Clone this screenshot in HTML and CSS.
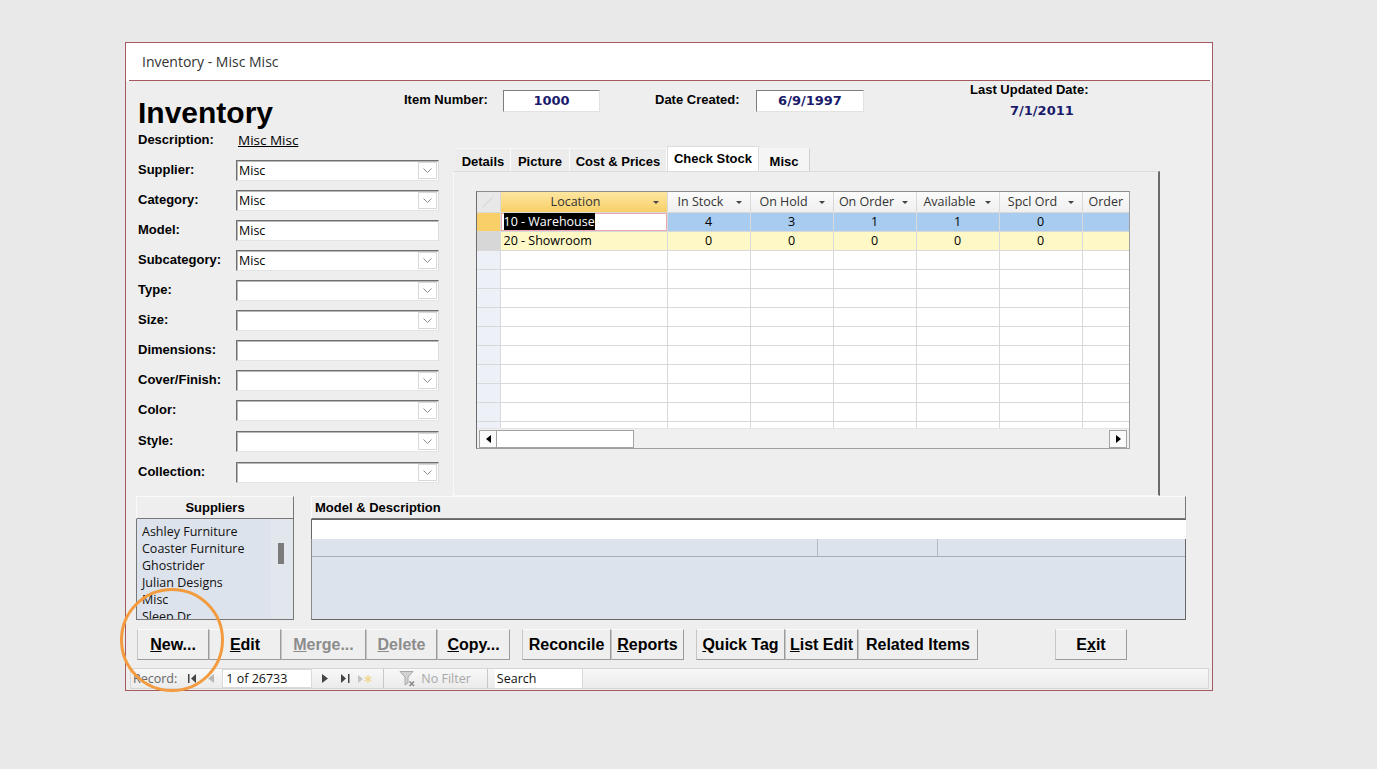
FILE: index.html
```html
<!DOCTYPE html>
<html lang="en">
<head>
    <meta charset="UTF-8">
    <meta name="viewport" content="width=device-width, initial-scale=1.0">
    <title>Inventory - Misc Misc</title>
    <link rel="stylesheet" href="styles.css">
</head>
<body>
    <div class="window">
        <div class="titlebar"><div class="title">Inventory - Misc Misc</div></div>

        <div class="form">
            <!-- Header -->
            <div class="head">
                <h1 class="heading">Inventory</h1>
                <span class="hlabel item-label">Item Number:</span>
                <div class="hbox item-box">1000</div>
                <span class="hlabel date-label">Date Created:</span>
                <div class="hbox date-box">6/9/1997</div>
                <div class="updated">
                    <div class="hlabel">Last Updated Date:</div>
                    <div class="upd-val">7/1/2011</div>
                </div>
            </div>

            <div class="main">
                <!-- Left fields -->
                <div class="fields">
                    <div class="desc"><span class="lbl">Description:</span><span class="desc-val">Misc Misc</span></div>
                    <div class="row"><span class="lbl">Supplier:</span><div class="input"><span class="val">Misc</span><span class="drop"><svg width="9" height="5" viewBox="0 0 9 5"><polyline points="0.5,0.5 4.5,4.5 8.5,0.5" fill="none" stroke="#8a8a8a"/></svg></span></div></div>
                    <div class="row"><span class="lbl">Category:</span><div class="input"><span class="val">Misc</span><span class="drop"><svg width="9" height="5" viewBox="0 0 9 5"><polyline points="0.5,0.5 4.5,4.5 8.5,0.5" fill="none" stroke="#8a8a8a"/></svg></span></div></div>
                    <div class="row"><span class="lbl">Model:</span><div class="input"><span class="val">Misc</span></div></div>
                    <div class="row"><span class="lbl">Subcategory:</span><div class="input"><span class="val">Misc</span><span class="drop"><svg width="9" height="5" viewBox="0 0 9 5"><polyline points="0.5,0.5 4.5,4.5 8.5,0.5" fill="none" stroke="#8a8a8a"/></svg></span></div></div>
                    <div class="row"><span class="lbl">Type:</span><div class="input"><span class="val"></span><span class="drop"><svg width="9" height="5" viewBox="0 0 9 5"><polyline points="0.5,0.5 4.5,4.5 8.5,0.5" fill="none" stroke="#8a8a8a"/></svg></span></div></div>
                    <div class="row"><span class="lbl">Size:</span><div class="input"><span class="val"></span><span class="drop"><svg width="9" height="5" viewBox="0 0 9 5"><polyline points="0.5,0.5 4.5,4.5 8.5,0.5" fill="none" stroke="#8a8a8a"/></svg></span></div></div>
                    <div class="row"><span class="lbl">Dimensions:</span><div class="input"><span class="val"></span></div></div>
                    <div class="row"><span class="lbl">Cover/Finish:</span><div class="input"><span class="val"></span><span class="drop"><svg width="9" height="5" viewBox="0 0 9 5"><polyline points="0.5,0.5 4.5,4.5 8.5,0.5" fill="none" stroke="#8a8a8a"/></svg></span></div></div>
                    <div class="row"><span class="lbl">Color:</span><div class="input"><span class="val"></span><span class="drop"><svg width="9" height="5" viewBox="0 0 9 5"><polyline points="0.5,0.5 4.5,4.5 8.5,0.5" fill="none" stroke="#8a8a8a"/></svg></span></div></div>
                    <div class="row nudge"><span class="lbl">Style:</span><div class="input"><span class="val"></span><span class="drop"><svg width="9" height="5" viewBox="0 0 9 5"><polyline points="0.5,0.5 4.5,4.5 8.5,0.5" fill="none" stroke="#8a8a8a"/></svg></span></div></div>
                    <div class="row nudge"><span class="lbl">Collection:</span><div class="input"><span class="val"></span><span class="drop"><svg width="9" height="5" viewBox="0 0 9 5"><polyline points="0.5,0.5 4.5,4.5 8.5,0.5" fill="none" stroke="#8a8a8a"/></svg></span></div></div>
                </div>

                <!-- Tabs -->
                <div class="tabs-col">
                    <div class="tabs">
                        <div class="tab t-details">Details</div>
                        <div class="tab t-picture">Picture</div>
                        <div class="tab t-cost">Cost &amp; Prices</div>
                        <div class="tab t-stock active">Check Stock</div>
                        <div class="tab t-misc">Misc</div>
                    </div>
                    <div class="page">
                        <div class="grid">
                            <div class="grid-body">
                                <table>
                                    <colgroup>
                                        <col class="c-sel"><col class="c-loc"><col class="c-num"><col class="c-num"><col class="c-num"><col class="c-num"><col class="c-num"><col class="c-ord">
                                    </colgroup>
                                    <tr class="hdr-row">
                                        <th class="corner"><svg width="12" height="12" viewBox="0 0 12 12"><line x1="1" y1="11" x2="11" y2="1" stroke="#d2d2d2"/></svg></th>
                                        <th class="hot"><div class="hd"><span>Location</span><i class="arr"></i></div></th>
                                        <th><div class="hd"><span>In Stock</span><i class="arr"></i></div></th>
                                        <th><div class="hd"><span>On Hold</span><i class="arr"></i></div></th>
                                        <th><div class="hd"><span>On Order</span><i class="arr"></i></div></th>
                                        <th><div class="hd"><span>Available</span><i class="arr"></i></div></th>
                                        <th><div class="hd"><span>Spcl Ord</span><i class="arr"></i></div></th>
                                        <th><div class="hd hd-left"><span>Order</span></div></th>
                                    </tr>
                                    <tr class="cur">
                                        <td class="sel"></td>
                                        <td class="loc"><span class="hl">10 - Warehouse</span></td>
                                        <td>4</td><td>3</td><td>1</td><td>1</td><td>0</td><td></td>
                                    </tr>
                                    <tr class="alt">
                                        <td class="sel"></td>
                                        <td class="loc">20 - Showroom</td>
                                        <td>0</td><td>0</td><td>0</td><td>0</td><td>0</td><td></td>
                                    </tr>
                                    <tr class="empty"><td class="sel"></td><td></td><td></td><td></td><td></td><td></td><td></td><td></td></tr>
                                    <tr class="empty"><td class="sel"></td><td></td><td></td><td></td><td></td><td></td><td></td><td></td></tr>
                                    <tr class="empty"><td class="sel"></td><td></td><td></td><td></td><td></td><td></td><td></td><td></td></tr>
                                    <tr class="empty"><td class="sel"></td><td></td><td></td><td></td><td></td><td></td><td></td><td></td></tr>
                                    <tr class="empty"><td class="sel"></td><td></td><td></td><td></td><td></td><td></td><td></td><td></td></tr>
                                    <tr class="empty"><td class="sel"></td><td></td><td></td><td></td><td></td><td></td><td></td><td></td></tr>
                                    <tr class="empty"><td class="sel"></td><td></td><td></td><td></td><td></td><td></td><td></td><td></td></tr>
                                    <tr class="empty"><td class="sel"></td><td></td><td></td><td></td><td></td><td></td><td></td><td></td></tr>
                                    <tr class="empty"><td class="sel"></td><td></td><td></td><td></td><td></td><td></td><td></td><td></td></tr>
                                    <tr class="empty"><td class="sel"></td><td></td><td></td><td></td><td></td><td></td><td></td><td></td></tr>
                                </table>
                            </div>
                            <div class="hscroll">
                                <div class="sb-btn"><svg width="5" height="8" viewBox="0 0 5 8"><polygon points="5,0 0,4 5,8" fill="#000"/></svg></div>
                                <div class="sb-thumb"></div>
                                <div class="sb-track"></div>
                                <div class="sb-btn"><svg width="5" height="8" viewBox="0 0 5 8"><polygon points="0,0 5,4 0,8" fill="#000"/></svg></div>
                            </div>
                        </div>
                    </div>
                </div>
            </div>

            <!-- Lists -->
            <div class="lists">
                <div class="sup">
                    <div class="panel-head">Suppliers</div>
                    <div class="sup-list">
                        <div class="sup-items">
                            <div>Ashley Furniture</div>
                            <div>Coaster Furniture</div>
                            <div>Ghostrider</div>
                            <div>Julian Designs</div>
                            <div>Misc</div>
                            <div>Sleep Dr.</div>
                        </div>
                        <div class="sup-track"><div class="sup-thumb"></div></div>
                    </div>
                </div>
                <div class="model">
                    <div class="panel-head">Model &amp; Description</div>
                    <div class="model-input"></div>
                    <div class="model-list">
                        <div class="ml-head"><span class="ml-c1"></span><span class="ml-c2"></span><span class="ml-c3"></span></div>
                    </div>
                </div>
            </div>

            <!-- Buttons -->
            <div class="buttons">
                <button class="btn w-new"><u>N</u>ew...</button>
                <button class="btn w-edit"><u>E</u>dit</button>
                <button class="btn w-merge off"><u>M</u>erge...</button>
                <button class="btn w-delete off"><u>D</u>elete</button>
                <button class="btn w-copy"><u>C</u>opy...</button>
                <button class="btn w-reconcile gap-s">Reconcile</button>
                <button class="btn w-reports"><u>R</u>eports</button>
                <button class="btn w-quick gap-s"><u>Q</u>uick Tag</button>
                <button class="btn w-list"><u>L</u>ist Edit</button>
                <button class="btn w-related">Related Items</button>
                <button class="btn w-exit gap-l">E<u>x</u>it</button>
            </div>
        </div>

        <!-- Record navigation -->
        <div class="navbar">
            <span class="nav-label">Record:</span>
            <svg class="nav-first" width="9" height="9" viewBox="0 0 9 9"><rect x="0" y="0" width="1.5" height="9" fill="#444"/><polygon points="8,0 3,4.5 8,9" fill="#444"/></svg>
            <svg class="nav-prev" width="6" height="9" viewBox="0 0 6 9"><polygon points="6,0 0,4.5 6,9" fill="#b8b8b8"/></svg>
            <div class="nav-box">1 of 26733</div>
            <svg class="nav-next" width="6" height="9" viewBox="0 0 6 9"><polygon points="0,0 6,4.5 0,9" fill="#444"/></svg>
            <svg class="nav-last" width="9" height="9" viewBox="0 0 9 9"><polygon points="0,0 5,4.5 0,9" fill="#444"/><rect x="7" y="0" width="1.5" height="9" fill="#444"/></svg>
            <svg class="nav-new" width="14" height="10" viewBox="0 0 14 10"><polygon points="0,1 5,5 0,9" fill="#c4c4c4"/><path d="M10 1v8M6.5 3l7 4M13.5 3l-7 4" stroke="#f0d488" stroke-width="1.4"/></svg>
            <span class="nav-sep"></span>
            <svg class="nav-filter" width="18" height="17" viewBox="0 0 18 17"><path d="M1 1.5h13l-5 5.5v6l-3 2v-8z" fill="#d2d2d2" stroke="#a8a8a8"/><path d="M10.5 11.5l4.5 4.5M15 11.5l-4.5 4.5" stroke="#8a8a8a" stroke-width="1.6"/></svg>
            <span class="nav-filter-text">No Filter</span>
            <span class="nav-sep sep2"></span>
            <div class="nav-search">Search</div>
        </div>
    </div>

    <div class="annot"></div>
</body>
</html>
```

FILE: styles.css
```css
body {
    margin: 0;
    background: #e9e9e9;
    font-family: "Open Sans", "Noto Sans", sans-serif;
    font-size: 12.5px;
    color: #000;
}
.window {
    margin: 42px 0 0 125px;
    width: 1088px;
    box-sizing: border-box;
    border: 1px solid #a45b60;
    background: #eeeeee;
    padding-bottom: 1px;
}
.titlebar {
    background: #fff;
    height: 38px;
}
.title {
    margin: 0 2px 0 3px;
    height: 37px;
    border-bottom: 1px solid #a45b60;
    padding-left: 13px;
    line-height: 38px;
    font-size: 14px;
    color: #333;
}
.form {
    padding-left: 12px;
}

/* header */
.head {
    display: flex;
    align-items: flex-start;
    height: 50px;
}
.heading {
    margin: 15px 0 0;
    width: 266px;
    font: bold 30px/34px "Liberation Sans", Arial, sans-serif;
}
.hlabel {
    font: bold 13px/22px "Liberation Sans", Arial, sans-serif;
}
.item-label {
    width: 88px;
    margin: 8px 11px 0 0;
}
.date-label {
    width: 92px;
    margin: 8px 9px 0 55px;
}
.hbox {
    margin-top: 9px;
    height: 22px;
    box-sizing: border-box;
    background: #fff;
    border: 1px solid;
    border-color: #7d7d7d #e2e2e2 #e2e2e2 #7d7d7d;
    font: bold 13px/20px "DejaVu Sans", sans-serif;
    color: #1b1b6b;
    text-align: center;
}
.item-box { width: 97px; }
.date-box { width: 108px; }
.updated {
    margin-left: 106px;
}
.updated .hlabel {
    line-height: 17px;
}
.upd-val {
    margin-top: 4px;
    padding-left: 40px;
    font: bold 13px/18px "DejaVu Sans", sans-serif;
    color: #1b1b6b;
}

/* left fields */
.main {
    display: flex;
    height: 365px;
}
.fields {
    width: 302px;
}
.desc {
    display: flex;
    height: 24px;
    line-height: 18px;
}
.lbl {
    width: 98px;
    flex: none;
    font: bold 13px/18px "Liberation Sans", Arial, sans-serif;
}
.desc-val {
    margin-left: 2px;
    font-size: 13.5px;
    text-decoration: underline;
}
.row {
    display: flex;
    align-items: center;
    height: 30px;
}
.row.nudge {
    margin-top: 1px;
}
.input {
    width: 203px;
    height: 21px;
    box-sizing: border-box;
    background: #fff;
    border: 1px solid;
    border-color: #6f6f6f #dcdcdc #e4e4e4 #6f6f6f;
    box-shadow: inset 1px 1px 0 #b8b8b8;
    display: flex;
    align-items: center;
    padding-left: 2px;
}
.val {
    flex: 1;
    line-height: 17px;
}
.drop {
    width: 19px;
    height: 17px;
    box-sizing: border-box;
    border: 1px solid #d8d8d8;
    margin-right: 1px;
    display: flex;
    align-items: center;
    justify-content: center;
    background: #fff;
}

/* tabs */
.tabs-col {
    margin: 17px 0 0 13px;
    width: 707px;
}
.tabs {
    display: flex;
    height: 23px;
    padding-left: 3px;
}
.tab {
    box-sizing: border-box;
    height: 23px;
    padding-top: 2px;
    border-right: 1px solid #fdfdfd;
    border-top: 1px solid #f6f6f6;
    background: #ececec;
    font: bold 13px/21px "Liberation Sans", Arial, sans-serif;
    text-align: center;
}
.t-details { width: 55px; }
.t-picture { width: 59px; }
.t-cost { width: 97px; }
.t-stock { width: 92px; }
.t-misc { width: 51px; background: #f5f5f5; border-right-color: #cfcfcf; }
.tab.active {
    background: #fff;
    margin-top: -2px;
    height: 25px;
    padding-top: 1px;
    line-height: 21px;
    border: 1px solid #dcdcdc;
    border-bottom: none;
}
.page {
    height: 325px;
    box-sizing: border-box;
    border: 1px solid #f8f8f8;
    border-top-color: #dcdcdc;
    border-right: 2px solid #6a6a6a;
}

/* datasheet */
.grid {
    margin: 19px 0 0 22px;
    width: 654px;
    height: 258px;
    box-sizing: border-box;
    border: 1px solid #a0a0a0;
    border-left-color: #6d6d6d;
    border-top-color: #8c8c8c;
    background: #fff;
}
.grid-body {
    height: 236px;
    overflow: hidden;
}
table {
    border-collapse: collapse;
    table-layout: fixed;
    width: 664px;
}
.c-sel { width: 23px; }
.c-loc { width: 167px; }
.c-num { width: 83px; }
.c-ord { width: 60px; }
td, th {
    border: 1px solid #d9d9d9;
    padding: 0;
    line-height: 17px;
    white-space: nowrap;
    overflow: hidden;
    font-weight: normal;
    text-align: center;
}
tr { height: 19px; }
.hdr-row { height: 20px; }
.hdr-row th {
    border-top: none;
    background: linear-gradient(#fbfbfb, #efefef);
    color: #333;
}
td:first-child, th:first-child {
    border-left: none;
}
.hdr-row th.corner {
    background: #e8e8e8;
    vertical-align: middle;
}
.corner svg { display: block; margin: 0 auto; }
.hdr-row th.hot {
    background: linear-gradient(#fde6a0, #f8cf67);
}
.hd {
    display: flex;
    align-items: center;
}
.hd span {
    flex: 1;
    text-align: center;
    padding-left: 4px;
}
.hd-left span {
    text-align: left;
    padding-left: 6px;
}
.arr {
    width: 0;
    height: 0;
    border-left: 3px solid transparent;
    border-right: 3px solid transparent;
    border-top: 3px solid #444;
    margin: 2px 8px 0 6px;
}
.loc {
    text-align: left;
    padding-left: 3px;
}
.cur td { background: #a8ccef; }
.cur td.sel { background: #f9cf68; }
.cur td.loc {
    background: #fff;
    box-shadow: inset 0 0 0 1px #eaa7ad;
}
.hl {
    background: #000;
    color: #fff;
}
.alt td { background: #fdf8c5; }
.alt td.sel { background: #d7d7d7; }
.empty td.sel { background: #eef0f8; }
.hscroll {
    height: 20px;
    box-sizing: border-box;
    display: flex;
    align-items: center;
    padding: 0 2px;
    background: #f0f0f0;
    border-top: 1px solid #e3e3e3;
}
.sb-btn {
    width: 18px;
    height: 18px;
    box-sizing: border-box;
    border: 1px solid #a3a3a3;
    background: #fbfbfb;
    display: flex;
    align-items: center;
    justify-content: center;
}
.sb-thumb {
    width: 137px;
    height: 18px;
    box-sizing: border-box;
    border: 1px solid #a3a3a3;
    border-left: none;
    background: #fff;
}
.sb-track { flex: 1; }

/* lists */
.lists {
    display: flex;
    height: 124px;
    margin-left: -2px;
}
.panel-head {
    height: 23px;
    box-sizing: border-box;
    border: 1px solid;
    border-color: #fafafa #777 #777 #fafafa;
    font: bold 13px/21px "Liberation Sans", Arial, sans-serif;
}
.sup { width: 158px; }
.sup .panel-head { text-align: center; }
.sup-list {
    height: 101px;
    box-sizing: border-box;
    border: 1px solid #777;
    border-top: none;
    background: #dde3ec;
    display: flex;
    overflow: hidden;
}
.sup-items {
    flex: 1;
    padding: 4px 0 0 5px;
    line-height: 17px;
    overflow: hidden;
    color: #111;
}
.sup-track {
    width: 22px;
    flex: none;
    background: #e2e6ed;
}
.sup-thumb {
    width: 6px;
    height: 21px;
    background: #7b7b7b;
    margin: 24px 0 0 7px;
}
.model {
    width: 875px;
    margin-left: 17px;
}
.model .panel-head { padding-left: 3px; }
.model-input {
    height: 20px;
    box-sizing: border-box;
    background: #fff;
    border-top: 1px solid #666;
    border-left: 1px solid #666;
}
.model-list {
    height: 81px;
    box-sizing: border-box;
    background: #dde3ec;
    border: 1px solid #666;
    border-top: none;
    border-left-color: #8a8a8a;
}
.ml-head {
    display: flex;
    height: 17px;
    border-bottom: 1px solid #a9b0bb;
}
.ml-head span { border-right: 1px solid #b3b9c3; }
.ml-c1 { width: 505px; }
.ml-c2 { width: 119px; }
.ml-c3 { flex: 1; border-right: none !important; }

/* buttons */
.buttons {
    display: flex;
    height: 31px;
    margin: 9px 0 0 -1px;
}
.btn {
    height: 31px;
    box-sizing: border-box;
    padding: 0;
    background: #efefef;
    border: 1px solid;
    border-color: #fbfbfb #9b9b9b #9b9b9b #c6c6c6;
    font: bold 16px "Liberation Sans", Arial, sans-serif;
    color: #000;
}
.btn.off { color: #8c8c8c; }
.gap-s { margin-left: 12px; }
.gap-l { margin-left: 77px; }
.w-new { width: 72px; }
.w-edit { width: 72px; }
.w-merge { width: 85px; }
.w-delete { width: 71px; }
.w-copy { width: 73px; }
.w-reconcile { width: 89px; }
.w-reports { width: 73px; }
.w-quick { width: 89px; }
.w-list { width: 73px; }
.w-related { width: 120px; }
.w-exit { width: 72px; }

/* record bar */
.navbar {
    margin: 8px 3px 0 4px;
    height: 21px;
    box-sizing: border-box;
    display: flex;
    align-items: center;
    background: linear-gradient(#f8f8f8, #ebebeb);
    border: 1px solid #d6d6d6;
    color: #666;
}
.nav-label { margin-left: 2px; }
.nav-first { margin-left: 11px; }
.nav-prev { margin-left: 11px; }
.nav-box {
    margin-left: 8px;
    width: 90px;
    height: 19px;
    box-sizing: border-box;
    background: #fff;
    border: 1px solid #dadada;
    padding-left: 3px;
    line-height: 17px;
    color: #111;
}
.nav-next { margin-left: 10px; }
.nav-last { margin-left: 13px; }
.nav-new { margin-left: 8px; }
.nav-sep {
    width: 1px;
    height: 19px;
    background: #c8c8c8;
    margin-left: 11px;
}
.nav-filter { margin-left: 15px; }
.nav-filter-text {
    margin-left: 4px;
    color: #a8a8a8;
}
.sep2 { margin-left: 16px; }
.nav-search {
    margin-left: 7px;
    width: 88px;
    height: 19px;
    box-sizing: border-box;
    background: #fff;
    border-right: 1px solid #dadada;
    padding-left: 2px;
    line-height: 19px;
    color: #111;
}

.annot {
    position: absolute;
    left: 120px;
    top: 588px;
    width: 104px;
    height: 104px;
    box-sizing: border-box;
    border: 3px solid #f39b3f;
    border-radius: 50%;
    pointer-events: none;
}
```
